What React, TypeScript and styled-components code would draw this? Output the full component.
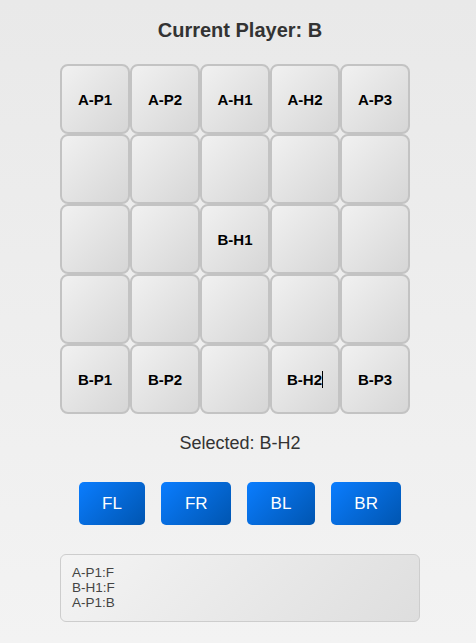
import React from "react";
import styled, { createGlobalStyle } from "styled-components";

const Global = createGlobalStyle`
  html, body { margin: 0; padding: 0; }
  body {
    min-height: 643px;
    background: linear-gradient(180deg, #e9e9e9 0%, #f3f3f3 100%);
    font-family: "Liberation Sans", Arial, sans-serif;
  }
`;

const Page = styled.div`
  display: flex;
  flex-direction: column;
  align-items: center;
  padding: 19px 0 0 4px;
`;

const Title = styled.h1`
  margin: 0;
  font-size: 20px;
  line-height: 23px;
  font-weight: bold;
  color: #333;
`;

const Board = styled.div`
  margin-top: 22px;
  width: 360px;
  display: grid;
  grid-template-columns: repeat(5, 70px);
  grid-auto-rows: 70px;
`;

const Cell = styled.div`
  box-sizing: border-box;
  border: 2px solid #c3c3c3;
  border-radius: 8px;
  background: linear-gradient(135deg, #f1f1f1 0%, #d6d6d6 100%);
  display: flex;
  align-items: center;
  justify-content: center;
  font-size: 15px;
  font-weight: bold;
  color: #000;
`;

const Caret = styled.span`
  display: inline-block;
  width: 0;
  height: 17px;
  border-left: 1px solid #000;
`;

const Selected = styled.div`
  margin-top: 19px;
  font-size: 18px;
  line-height: 21px;
  color: #333;
`;

const Controls = styled.div`
  margin-top: 28px;
  display: flex;
  gap: 16px;
`;

const MoveButton = styled.button`
  border: none;
  border-radius: 5px;
  padding: 12px 23.5px;
  font-family: "Liberation Sans", Arial, sans-serif;
  font-size: 17px;
  line-height: 19px;
  color: #fff;
  background: linear-gradient(135deg, #0a7dff 0%, #0055b0 100%);
  cursor: pointer;
`;

const Log = styled.div`
  margin-top: 29px;
  box-sizing: border-box;
  width: 360px;
  padding: 10px 11px 11px;
  border: 1px solid #cdcdcd;
  border-radius: 6px;
  background: linear-gradient(135deg, #f4f4f4 0%, #dedede 100%);
  font-size: 13.5px;
  line-height: 15px;
  color: #444;
`;

const board: string[][] = [
  ["A-P1", "A-P2", "A-H1", "A-H2", "A-P3"],
  ["", "", "", "", ""],
  ["", "", "B-H1", "", ""],
  ["", "", "", "", ""],
  ["B-P1", "B-P2", "", "B-H2", "B-P3"],
];

const moves = ["FL", "FR", "BL", "BR"];
const history = ["A-P1:F", "B-H1:F", "A-P1:B"];

export default function App() {
  return (
    <>
      <Global />
      <Page>
        <Title>Current Player: B</Title>
        <Board>
          {board.flatMap((row, r) =>
            row.map((label, c) => (
              <Cell key={`${r}-${c}`}>
                {label}
                {label === "B-H2" && <Caret />}
              </Cell>
            ))
          )}
        </Board>
        <Selected>Selected: B-H2</Selected>
        <Controls>
          {moves.map((m) => (
            <MoveButton key={m}>{m}</MoveButton>
          ))}
        </Controls>
        <Log>
          {history.map((h) => (
            <div key={h}>{h}</div>
          ))}
        </Log>
      </Page>
    </>
  );
}
